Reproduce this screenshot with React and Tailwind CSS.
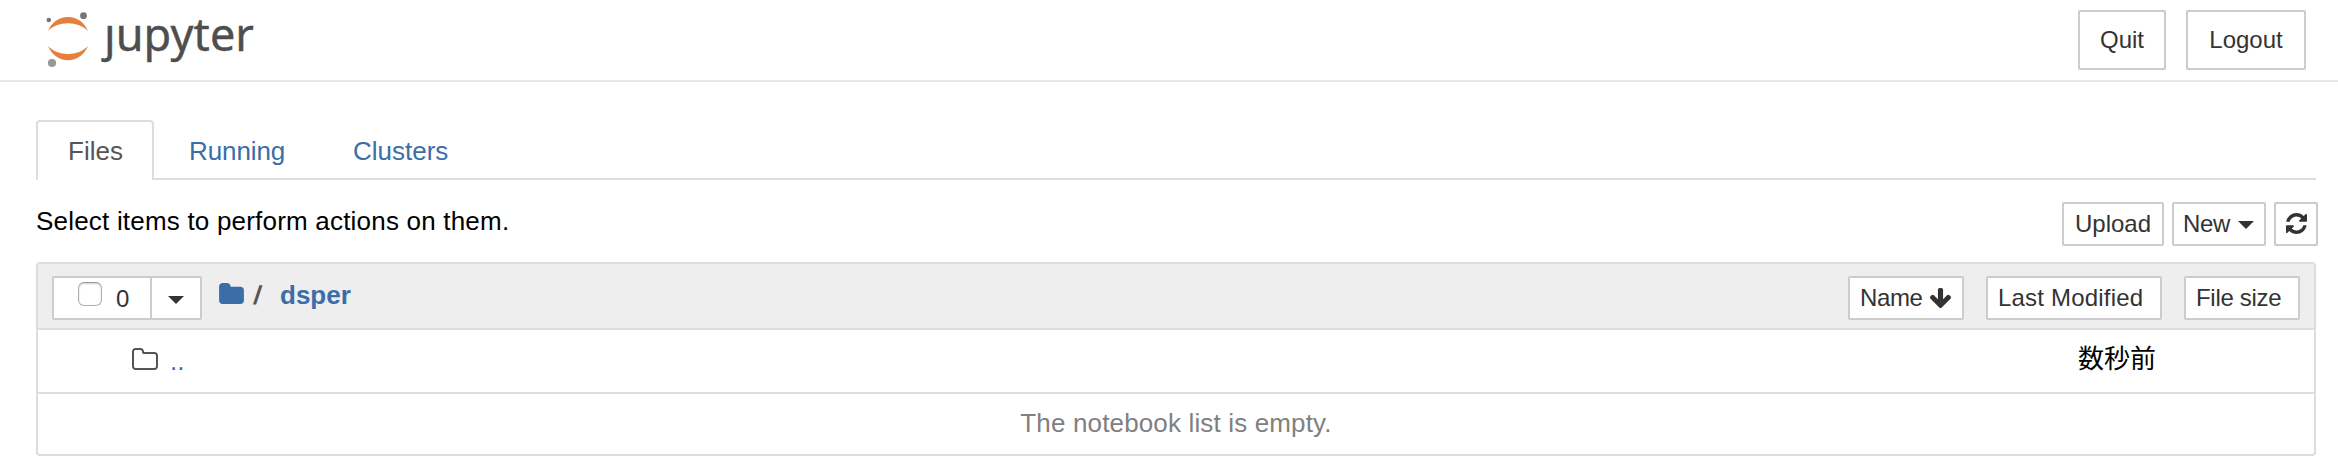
import React from 'react';

function JupyterLogo() {
  return (
    <div className="flex items-start">
      <svg className="mt-2 block h-15 w-[52px]" viewBox="0 0 52 60" aria-hidden="true">
        <path d="M6 23 C9.5 14.5 17 9 26 9 C35 9 42.5 14.5 46 23 C41.5 18 34 15.2 26 15.2 C18 15.2 10.5 18 6 23Z" fill="#e67f3c" />
        <path d="M6 38 C9.5 46.5 17 52.2 26 52.2 C35 52.2 42.5 46.5 46 38 C41.5 43 34 46 26 46 C18 46 10.5 43 6 38Z" fill="#e67f3c" />
        <circle cx="6.8" cy="12" r="2.3" fill="#767676" />
        <circle cx="41.5" cy="7.7" r="3.4" fill="#767676" />
        <circle cx="10" cy="55" r="4.1" fill="#989898" />
      </svg>
      <span className="ml-[10px] block h-16 font-['Noto_Sans'] text-[45px] leading-[67px] tracking-[0.1px] text-[#4e4e4e] [-webkit-text-stroke:0.4px_#4e4e4e]">ȷupyter</span>
    </div>
  );
}

function Icon({ box, d, className }) {
  return (
    <svg className={`block shrink-0 ${className}`} viewBox={box} fill="currentColor" aria-hidden="true">
      <path d={d} />
    </svg>
  );
}

const REFRESH =
  'M1639 1056q0 5-1 7-64 268-268 434.5t-478 166.5q-146 0-282.5-55t-243.5-157l-129 129q-19 19-45 19t-45-19-19-45v-448q0-26 19-45t45-19h448q26 0 45 19t19 45-19 45l-137 137q71 66 161 102t187 36q134 0 250-65t186-179q11-17 53-117 8-23 30-23h192q13 0 22.5 9.5t9.5 22.5zm25-800v448q0 26-19 45t-45 19h-448q-26 0-45-19t-19-45 19-45l138-138q-148-137-349-137-134 0-250 65t-186 179q-11 17-53 117-8 23-30 23h-199q-13 0-22.5-9.5t-9.5-22.5v-7q65-268 270-434.5t480-166.5q146 0 284 55.5t245 156.5l130-129q19-19 45-19t45 19 19 45z';
const FOLDER =
  'M1728 608v704q0 92-66 158t-158 66h-1216q-92 0-158-66t-66-158v-960q0-92 66-158t158-66h320q92 0 158 66t66 158v32h672q92 0 158 66t66 158z';
const FOLDER_OPEN =
  'M1600 1312v-704q0-40-28-68t-68-28h-704q-40 0-68-28t-28-68v-64q0-40-28-68t-68-28h-320q-40 0-68 28t-28 68v960q0 40 28 68t68 28h1216q40 0 68-28t28-68zm128-704v704q0 92-66 158t-158 66h-1216q-92 0-158-66t-66-158v-960q0-92 66-158t158-66h320q92 0 158 66t66 158v32h672q92 0 158 66t66 158z';
const ARROW_DOWN =
  'M1675 832q0 53-37 90l-651 652q-39 37-91 37-53 0-90-37l-651-652q-38-36-38-90 0-53 38-91l74-75q39-37 91-37 53 0 90 37l294 294v-704q0-52 38-90t90-38h128q52 0 90 38t38 90v704l294-294q37-37 90-37 52 0 91 37l75 75q37 39 37 91z';

function Caret({ className }) {
  return <Icon className={`h-2 w-4 ${className}`} box="0 0 16 8" d="M0 0H16L8 8Z" />;
}

function Button({ className, children }) {
  return (
    <button className={`flex shrink-0 items-center rounded-[2px] border-2 border-[#ccc] bg-white text-2xl whitespace-nowrap text-[#333] ${className}`}>
      {children}
    </button>
  );
}

export default function App() {
  return (
    <div className="h-[474px] w-[2338px] overflow-hidden bg-white font-['Liberation_Sans','Noto_Sans_CJK_JP',sans-serif] text-[26px] leading-[36px] text-black">
      <header className="flex h-[82px] items-start justify-between border-b-2 border-[#e7e7e7] pr-8 pl-[42px]">
        <JupyterLogo />
        <div className="flex gap-5 pt-[10px]">
          <Button className="h-15 w-22 justify-center pb-[1px]">Quit</Button>
          <Button className="h-15 w-30 justify-center pb-[1px]">Logout</Button>
        </div>
      </header>

      <main className="pr-[20px] pl-9">
        <nav className="mt-[38px] mr-[2px] flex h-15">
          <a className="flex w-[118px] rounded-t-[4px] border-2 border-b-0 border-[#ddd] pt-[11px] pl-[30px] text-[#555]">Files</a>
          <div className="flex flex-1 border-b-2 border-[#ddd] pt-[13px] text-[#3b6ea8]">
            <a className="w-[164px] pl-[35px] tracking-[-0.1px]">Running</a>
            <a className="pl-[35px]">Clusters</a>
          </div>
        </nav>

        <div className="flex justify-between pt-[22px]">
          <p className="pt-[1px] tracking-[0.2px]">Select items to perform actions on them.</p>
          <div className="flex gap-2">
            <Button className="h-11 w-[102px] justify-center pb-[1px]">Upload</Button>
            <Button className="h-11 w-[94px] pb-[1px] pl-[9px] tracking-[-0.3px]">
              New
              <Caret className="mt-[3px] mr-[10px] ml-auto" />
            </Button>
            <Button className="h-11 w-11 justify-center">
              <Icon className="mt-[-1px] h-[21px] w-[21px]" box="128 128 1536 1536" d={REFRESH} />
            </Button>
          </div>
        </div>

        <section className="mt-4 mr-[2px] h-[194px] rounded-[4px] border-2 border-[#ddd]">
          <div className="flex h-[66px] items-start border-b-2 border-[#ddd] bg-[#eee] pr-[14px] pl-[14px]">
            <div className="mt-3 flex h-11 w-[150px] rounded-[2px] border-2 border-[#ccc] bg-white text-[#333]">
              <div className="flex w-[98px] items-start border-r-2 border-[#ccc] pt-1 pl-6">
                <span className="h-6 w-6 rounded-[6px] border border-[#b0b0b0] border-t-[#999] bg-white shadow-[inset_0_1px_2px_#ccc]" />
                <span className="ml-[14px] text-2xl leading-[34px]">0</span>
              </div>
              <Caret className="mt-[18px] ml-4" />
            </div>
            <div className="flex pt-[13px] font-bold">
              <Icon className="mt-[6px] ml-[17px] h-[21px] w-[25px] text-[#3b6ea8]" box="64 128 1664 1408" d={FOLDER} />
              <span className="ml-[10px] w-[26px] text-[#555] [transform:skewX(-8deg)]">/</span>
              <a className="text-[#3b6ea8]">dsper</a>
            </div>
            <div className="mt-3 ml-auto flex gap-[22px]">
              <Button className="h-11 w-[116px] pb-[1px] pl-[10px] tracking-[-0.4px]">
                Name
                <Icon className="mr-[11px] ml-auto h-[20px] w-[21px]" box="117 128 1558 1483" d={ARROW_DOWN} />
              </Button>
              <Button className="h-11 w-[176px] pb-[1px] pl-[10px] tracking-[0.2px]">Last Modified</Button>
              <Button className="h-11 w-[116px] pb-[1px] pl-[10px] tracking-[-0.3px]">File size</Button>
            </div>
          </div>
          <div className="flex h-16 items-start border-b-2 border-[#ddd] pl-[94px]">
            <Icon className="mt-[18px] h-[22px] w-[26px] text-[#555]" box="64 128 1664 1408" d={FOLDER_OPEN} />
            <a className="mt-[13px] ml-3 text-[#3b6ea8]">..</a>
            <span className="mt-[11px] mr-[158px] ml-auto">数秒前</span>
          </div>
          <div className="flex h-15 items-center justify-center pb-[2px] tracking-[0.15px] text-[#808080]">The notebook list is empty.</div>
        </section>
      </main>
    </div>
  );
}
